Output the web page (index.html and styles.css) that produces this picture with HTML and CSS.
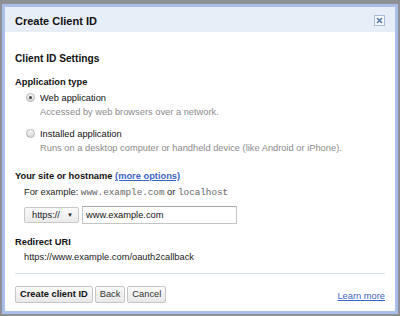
FILE: index.html
```html
<!DOCTYPE html>
<html>
  <head>
    <title>Create Client ID</title>
    <link rel="stylesheet" href="styles.css">
  </head>
  <body>
    <div class="dialog">
      <div class="dialog-header">
        <div class="dialog-title">Create Client ID</div>
        <div class="close-btn">
          <svg width="7" height="7" viewBox="0 0 7 7">
            <path d="M1 1 L6 6 M6 1 L1 6" stroke="#4f6fa8" stroke-width="1.4" />
          </svg>
        </div>
      </div>
      <div class="dialog-body">
        <div class="section-title">Client ID Settings</div>

        <div class="label label-type">Application type</div>
        <div class="option">
          <span class="radio checked"></span>
          <div>
            <div class="option-name">Web application</div>
            <div class="option-desc">Accessed by web browsers over a network.</div>
          </div>
        </div>
        <div class="option option-second">
          <span class="radio"></span>
          <div>
            <div class="option-name">Installed application</div>
            <div class="option-desc">Runs on a desktop computer or handheld device (like Android or iPhone).</div>
          </div>
        </div>

        <div class="label label-site">Your site or hostname <a class="link more" href="#">(more options)</a></div>
        <div class="indent hint">For example: <span class="mono">www.example.com</span> or <span class="mono">localhost</span></div>
        <div class="indent site-row">
          <div class="select">https:// <span class="arrow">&#9660;</span></div>
          <div class="text-input">www.example.com</div>
        </div>

        <div class="label label-redirect">Redirect URI</div>
        <div class="indent redirect">https://www.example.com/oauth2callback</div>

        <div class="footer">
          <div class="buttons">
            <button class="btn btn-primary">Create client ID</button>
            <button class="btn">Back</button>
            <button class="btn">Cancel</button>
          </div>
          <a class="link learn-more" href="#">Learn more</a>
        </div>
      </div>
    </div>
  </body>
</html>
```

FILE: styles.css
```css
html,
body {
  height: 100%;
}

body {
  margin: 0;
  padding: 4px 2px 2px 2px;
  box-sizing: border-box;
  background: #8e9096;
  font-family: "Liberation Sans", Arial, sans-serif;
  font-size: 9.3px;
  line-height: 14px;
  color: #222;
  display: flex;
}

.dialog {
  flex: 1;
  border: 3px solid #a9bfea;
  background: #fff;
  display: flex;
  flex-direction: column;
}

.dialog-header {
  height: 25px;
  background: #e8eef8;
  display: flex;
  align-items: center;
  justify-content: space-between;
  padding: 2px 10px 0 10px;
  box-sizing: border-box;
}

.dialog-title {
  font-size: 11px;
  font-weight: bold;
  color: #111;
}

.close-btn {
  width: 9px;
  height: 9px;
  border: 1px solid #aabbd8;
  background: #f4f7fc;
  display: flex;
  align-items: center;
  justify-content: center;
}

.dialog-body {
  flex: 1;
  padding: 20px 10px 0 10px;
  display: flex;
  flex-direction: column;
}

.section-title {
  font-size: 10.2px;
  font-weight: bold;
  color: #111;
}

.label {
  font-weight: bold;
  color: #111;
}

.label-type {
  margin-top: 9px;
}

.option {
  display: flex;
  align-items: flex-start;
  margin-left: 11px;
  margin-top: 2px;
}

.option-second {
  margin-top: 8px;
}

.radio {
  width: 7px;
  height: 7px;
  border-radius: 50%;
  border: 1px solid #b4b4b4;
  background: linear-gradient(#fafafa, #d6d6d6);
  margin: 2px 5px 0 0;
  flex-shrink: 0;
  display: flex;
  align-items: center;
  justify-content: center;
}

.radio.checked::after {
  content: "";
  width: 3px;
  height: 3px;
  border-radius: 50%;
  background: #444;
}

.option-name {
  color: #111;
}

.option-desc {
  color: #8a8a8a;
}

.label-site {
  margin-top: 14px;
}

.link {
  color: #3c64c8;
  text-decoration: underline;
}

.indent {
  margin-left: 9px;
}

.hint {
  margin-top: 2px;
  color: #222;
}

.mono {
  font-family: "Liberation Mono", "Courier New", monospace;
  color: #666;
}

.site-row {
  margin-top: 6px;
  display: flex;
  align-items: center;
  gap: 3px;
}

.select {
  width: 55px;
  height: 16px;
  box-sizing: border-box;
  border: 1px solid #c8c8c8;
  border-radius: 2px;
  background: linear-gradient(#f9f9f9, #ebebeb);
  display: flex;
  align-items: center;
  justify-content: space-between;
  padding: 0 5px 0 7px;
  color: #222;
}

.arrow {
  font-size: 6px;
}

.text-input {
  width: 155px;
  height: 18px;
  box-sizing: border-box;
  border: 1px solid #c4c4c4;
  border-top-color: #a8a8a8;
  line-height: 16px;
  padding: 0 3px;
  color: #111;
}

.label-redirect {
  margin-top: 11px;
}

.redirect {
  margin-top: 1px;
  color: #222;
}

.footer {
  margin-top: 9px;
  border-top: 1px solid #d6e1f4;
  padding-top: 11px;
  display: flex;
  justify-content: space-between;
  align-items: center;
}

.buttons {
  display: flex;
  gap: 2px;
}

.btn {
  font-family: "Liberation Sans", Arial, sans-serif;
  font-size: 9.3px;
  height: 17px;
  padding: 0 4px;
  margin: 0;
  border: 1px solid #c6c6c6;
  border-radius: 2px;
  background: linear-gradient(#fafafa, #e8e8e8);
  color: #333;
}

.btn-primary {
  font-weight: bold;
  color: #111;
}

.learn-more {
  margin-top: 4px;
}
```
